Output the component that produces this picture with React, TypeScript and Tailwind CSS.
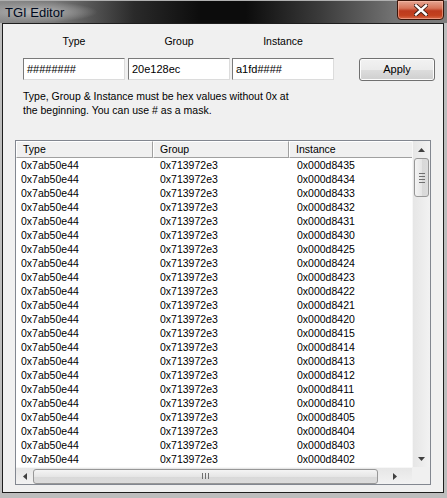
import React from "react";

const instances = [
  "0x000d8435","0x000d8434","0x000d8433","0x000d8432","0x000d8431","0x000d8430",
  "0x000d8425","0x000d8424","0x000d8423","0x000d8422","0x000d8421","0x000d8420",
  "0x000d8415","0x000d8414","0x000d8413","0x000d8412","0x000d8411","0x000d8410",
  "0x000d8405","0x000d8404","0x000d8403","0x000d8402",
];

const font = { fontFamily: '"Liberation Sans", Arial, sans-serif' };

function Input({ value }: { value: string }) {
  return (
    <div className="w-[102px] h-[22px] bg-white border border-t-[#7a7a7a] border-l-[#7a7a7a] border-r-[#dcdcdc] border-b-[#dcdcdc] flex items-center pl-[3px] text-[11px] leading-[13px] text-black">
      {value}
    </div>
  );
}

function Arrow({ dir }: { dir: "up" | "down" | "left" | "right" }) {
  const pts: Record<string, string> = {
    up: "0,4 7,4 3.5,0",
    down: "0,0 7,0 3.5,4",
    left: "4,0 4,7 0,3.5",
    right: "0,0 0,7 4,3.5",
  };
  const w = dir === "up" || dir === "down" ? 7 : 4;
  const h = dir === "up" || dir === "down" ? 4 : 7;
  return (
    <svg width={w} height={h} viewBox={`0 0 ${w} ${h}`}>
      <polygon points={pts[dir]} fill="#404040" />
    </svg>
  );
}

export default function App() {
  return (
    <div className="w-[447px] h-[498px] bg-[#bdbdbd] flex flex-col overflow-hidden" style={font}>
      {/* Title bar */}
      <div className="h-[23px] shrink-0 relative bg-[linear-gradient(to_right,#8a8a8a_0%,#7a7a7a_12%,#2a2a2a_30%,#0c0c0c_45%,#0c0c0c_55%,#3c3c3c_72%,#727272_88%,#7e7e7e_100%)] border-t border-[#b0b0b0]">
        <div className="absolute left-0 top-0 w-[100px] h-[22px] bg-[radial-gradient(ellipse_at_35%_50%,rgba(190,190,190,0.9)_0%,rgba(160,160,160,0.5)_45%,rgba(120,120,120,0)_68%)]" />
        <div className="absolute left-[5px] top-[4px] text-[13px] leading-[15px] text-[#000a1e]">
          TGI Editor
        </div>
        <div className="absolute right-[3px] top-[-1px] w-[47px] h-[20px] rounded-b-[4px] border border-[#3b1409] bg-[linear-gradient(to_bottom,#e6a592_0%,#d77459_40%,#bd3a1e_55%,#c3411f_80%,#d7694a_100%)] flex items-center justify-center shadow-[inset_0_0_0_1px_rgba(255,200,180,0.5)]">
          <svg width="14" height="12" viewBox="0 0 14 12">
            <path d="M2 1.5 L12 10.5 M12 1.5 L2 10.5" stroke="#3a1a12" strokeWidth="4.2" strokeLinecap="square" />
            <path d="M2 1.5 L12 10.5 M12 1.5 L2 10.5" stroke="#ffffff" strokeWidth="2.4" strokeLinecap="square" />
          </svg>
        </div>
      </div>

      {/* Client */}
      <div className="ml-[2px] mr-[3px] mb-[5px] flex-1 flex flex-col bg-[#f0f0f0] border-l border-r border-b border-t border-[#1e1e1e] text-[10.5px] leading-[13px] text-black">
        <div className="pl-[20px] pt-[11px] flex">
          <div className="w-[102px] text-center">Type</div>
          <div className="w-[102px] ml-[3px] text-center">Group</div>
          <div className="w-[102px] ml-[2px] text-center">Instance</div>
        </div>
        <div className="pl-[20px] mt-[10px] flex items-start">
          <Input value="########" />
          <div className="ml-[3px]"><Input value="20e128ec" /></div>
          <div className="ml-[2px]"><Input value="a1fd####" /></div>
          <div className="ml-[25px] w-[76px] h-[23px] rounded-[3px] border border-[#707070] bg-[linear-gradient(to_bottom,#f2f2f2_0%,#ebebeb_50%,#dddddd_51%,#cfcfcf_100%)] shadow-[inset_0_0_0_1px_#fcfcfc] flex items-center justify-center text-[11px]">
            Apply
          </div>
        </div>
        <div className="pl-[20px] mt-[8px] leading-[14px]">
          <div>Type, Group &amp; Instance must be hex values without 0x at</div>
          <div>the beginning. You can use # as a mask.</div>
        </div>

        {/* List view */}
        <div className="ml-[12px] mt-[23px] w-[416px] h-[345px] border border-[#828790] bg-white flex">
          <div className="w-[396px] flex flex-col">
            <div className="h-[17px] flex bg-[#f0f0f0] shrink-0">
              <div className="w-[137px] h-full border-t border-l border-white border-r border-r-[#a0a0a0] border-b border-b-[#a0a0a0] pl-[6px] flex items-center">Type</div>
              <div className="w-[136px] h-full border-t border-l border-white border-r border-r-[#a0a0a0] border-b border-b-[#a0a0a0] pl-[6px] flex items-center">Group</div>
              <div className="flex-1 h-full border-t border-l border-white border-b border-b-[#a0a0a0] pl-[6px] flex items-center">Instance</div>
            </div>
            <div className="flex-1 overflow-hidden">
              {instances.map((inst) => (
                <div key={inst} className="h-[14px] flex items-center">
                  <div className="w-[137px] pl-[5px]">0x7ab50e44</div>
                  <div className="w-[136px] pl-[7px]">0x713972e3</div>
                  <div className="flex-1 pl-[8px]">{inst}</div>
                </div>
              ))}
            </div>
            {/* Horizontal scrollbar */}
            <div className="h-[17px] shrink-0 bg-[linear-gradient(to_bottom,#e6e6e6,#f2f2f2)] border-t border-[#f7f7f7] flex items-center">
              <div className="w-[17px] flex justify-center"><Arrow dir="left" /></div>
              <div className="w-[345px] h-[15px] rounded-[3px] border border-[#979797] bg-[linear-gradient(to_bottom,#f4f4f4,#e6e6e6_50%,#d8d8d8_51%,#dcdcdc)] flex items-center justify-center gap-[2px]">
                <div className="w-px h-[6px] bg-[#707070]" />
                <div className="w-px h-[6px] bg-[#707070]" />
                <div className="w-px h-[6px] bg-[#707070]" />
              </div>
              <div className="flex-1 flex justify-center"><Arrow dir="right" /></div>
            </div>
          </div>
          {/* Vertical scrollbar */}
          <div className="w-[18px] flex flex-col">
            <div className="flex-1 flex flex-col bg-[linear-gradient(to_right,#e6e6e6,#f2f2f2)] border-l border-[#f7f7f7]">
              <div className="h-[17px] flex items-center justify-center"><Arrow dir="up" /></div>
              <div className="mx-[1px] h-[39px] rounded-[3px] border border-[#979797] bg-[linear-gradient(to_right,#f4f4f4,#e6e6e6_50%,#d8d8d8_51%,#dcdcdc)] flex flex-col items-center justify-center gap-[2px]">
                <div className="w-[6px] h-px bg-[#707070]" />
                <div className="w-[6px] h-px bg-[#707070]" />
                <div className="w-[6px] h-px bg-[#707070]" />
                <div className="w-[6px] h-px bg-[#707070]" />
              </div>
              <div className="flex-1" />
              <div className="h-[17px] flex items-center justify-center"><Arrow dir="down" /></div>
            </div>
            <div className="h-[17px] bg-[#f0f0f0]" />
          </div>
        </div>
      </div>
    </div>
  );
}
